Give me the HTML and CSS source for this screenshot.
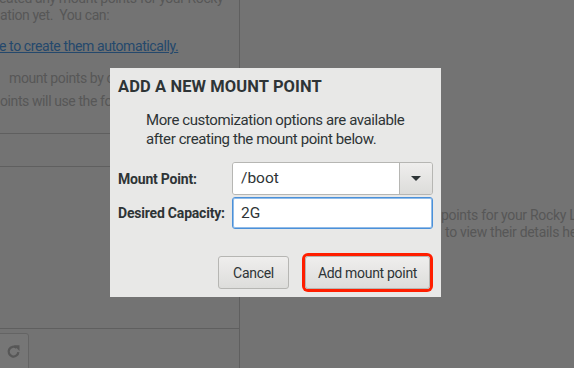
FILE: index.html
```html
<!DOCTYPE html>
<html lang="en">
<head>
    <meta charset="UTF-8">
    <title>Add a New Mount Point</title>
    <link rel="stylesheet" href="styles.css">
</head>
<body>
    <div class="screen">
        <div class="left-pane">
            <div class="intro">
                <p class="line first">eated any mount points for your Rocky</p>
                <p class="line">ation yet.&nbsp; You can:</p>
                <p class="line link-line"><a href="#" class="auto-link">e to create them automatically.</a></p>
                <p class="line manual">mount points by clicking</p>
                <p class="line scheme">oints will use the following</p>
            </div>
            <div class="scheme-row"></div>
            <div class="pane-fill"></div>
            <div class="toolbar">
                <button class="tool-btn" title="Reload">
                    <svg width="15" height="15" viewBox="0 0 16 16">
                        <path d="M13.2 8.6 A5.2 5.2 0 1 1 11.3 4.1" fill="none" stroke="#575757" stroke-width="2.4"/>
                        <polygon points="8.4,1.4 14.4,1.4 14.4,7.4" fill="#575757"/>
                    </svg>
                </button>
            </div>
        </div>

        <div class="right-pane">
            <p class="hint">points for your Rocky Linux installation,</p>
            <p class="hint second">to view their details here.</p>
        </div>

        <div class="dialog">
            <div class="dialog-title">ADD A NEW MOUNT POINT</div>
            <p class="dialog-desc">More customization options are available<br>after creating the mount point below.</p>

            <div class="form">
                <label class="form-label">Mount Point:</label>
                <div class="combo">
                    <div class="combo-entry">/boot</div>
                    <div class="combo-btn"><span class="arrow"></span></div>
                </div>
                <label class="form-label">Desired Capacity:</label>
                <div class="entry focused">2G</div>
            </div>

            <div class="actions">
                <button class="btn btn-cancel">Cancel</button>
                <button class="btn btn-add">Add mount point</button>
            </div>
        </div>
    </div>
</body>
</html>
```

FILE: styles.css
```css
:root {
    --dim-bg: #737373;
    --dim-text: #575757;
    --dim-line: #5f5f5f;
    --dialog-bg: #e8e8e7;
    --text: #2e3436;
    --border: #b6b6b3;
    --focus: #4a90d9;
    --mark: #ff1e00;
}

* {
    margin: 0;
    padding: 0;
    box-sizing: border-box;
}

body {
    background: var(--dim-bg);
    font-family: Roboto, "Liberation Sans", sans-serif;
    color: var(--text);
    overflow: hidden;
}

.screen {
    position: relative;
    width: 574px;
    height: 368px;
    display: flex;
    overflow: hidden;
}

/* dimmed page behind the dialog */
.left-pane {
    width: 240px;
    height: 100%;
    border-right: 1px solid var(--dim-line);
    display: flex;
    flex-direction: column;
    overflow: hidden;
}

.intro {
    height: 134px;
    border-bottom: 1px solid var(--dim-line);
    font-size: 14px;
    line-height: 17px;
    letter-spacing: -0.4px;
    color: var(--dim-text);
}

.line {
    white-space: nowrap;
}

.line.first {
    margin-top: -10px;
    margin-left: -1px;
}

.link-line {
    margin-top: 14px;
    margin-left: -1px;
}

.auto-link {
    color: #24486c;
    text-decoration: underline;
}

.manual,
.scheme {
    width: 110px;
    overflow: hidden;
}

.manual {
    margin-top: 15px;
    padding-left: 9px;
}

.scheme {
    margin-top: 6px;
}

.scheme-row {
    height: 33px;
    border-bottom: 1px solid var(--dim-line);
}

.pane-fill {
    flex: 1;
    border-bottom: 1px solid var(--dim-line);
}

.toolbar {
    height: 39px;
    padding-top: 4px;
    display: flex;
}

.tool-btn {
    width: 34px;
    height: 40px;
    margin-left: -5px;
    background: #767676;
    border: 1px solid #646464;
    border-radius: 3px;
    display: flex;
    align-items: flex-start;
    justify-content: center;
    padding-top: 10px;
    padding-left: 3px;
}

.right-pane {
    flex: 1;
    padding-top: 207px;
    font-size: 14px;
    line-height: 17px;
    letter-spacing: -0.3px;
    color: var(--dim-text);
    white-space: nowrap;
    overflow: hidden;
}

.hint {
    padding-left: 201px;
}

.hint.second {
    padding-left: 205px;
}

/* dialog */
.dialog {
    position: absolute;
    left: 110px;
    top: 68px;
    width: 331px;
    height: 229px;
    background: var(--dialog-bg);
    padding: 9px 8px 0 8px;
}

.dialog-title {
    font-size: 16.5px;
    font-weight: 700;
    line-height: 20px;
    letter-spacing: 0.1px;
    color: #2e3436;
}

.dialog-desc {
    margin-top: 14px;
    margin-left: 28px;
    font-size: 15px;
    line-height: 19px;
    letter-spacing: -0.4px;
}

.form {
    margin-top: 13px;
    display: grid;
    grid-template-columns: 114px 201px;
    grid-template-rows: 33px 32px;
    row-gap: 2px;
    align-items: center;
}

.form-label {
    font-size: 14px;
    font-weight: 700;
    letter-spacing: -0.2px;
}

.combo {
    height: 33px;
    display: flex;
    border: 1px solid var(--border);
    border-radius: 3px;
    overflow: hidden;
}

.combo-entry {
    flex: 1;
    background: #fff;
    padding-left: 8px;
    font-size: 15.5px;
    line-height: 31px;
}

.combo-btn {
    width: 33px;
    border-left: 1px solid var(--border);
    background: linear-gradient(#efeeed, #dcdcda);
    display: flex;
    align-items: center;
    justify-content: center;
}

.arrow {
    width: 0;
    height: 0;
    border-left: 5px solid transparent;
    border-right: 5px solid transparent;
    border-top: 5px solid #2e3436;
}

.entry {
    height: 32px;
    background: #fff;
    border: 1px solid var(--border);
    border-radius: 3px;
    padding-left: 8px;
    font-size: 15.5px;
    line-height: 30px;
}

.entry.focused {
    border-color: var(--focus);
    box-shadow: inset 0 0 0 1px rgba(74, 144, 217, 0.6);
}

.actions {
    margin-top: 27px;
    padding-right: 3px;
    display: flex;
    justify-content: flex-end;
    gap: 16px;
}

.btn {
    height: 33px;
    padding: 0;
    white-space: nowrap;
    background: linear-gradient(#efeeed, #dddddb);
    border: 1px solid var(--border);
    border-radius: 3px;
    font-family: Roboto, "Liberation Sans", sans-serif;
    font-size: 14px;
    letter-spacing: -0.3px;
    color: var(--text);
}

.btn-cancel {
    width: 71px;
}

.btn-add {
    width: 125px;
    box-shadow: 0 0 0 3px var(--mark);
}
```
